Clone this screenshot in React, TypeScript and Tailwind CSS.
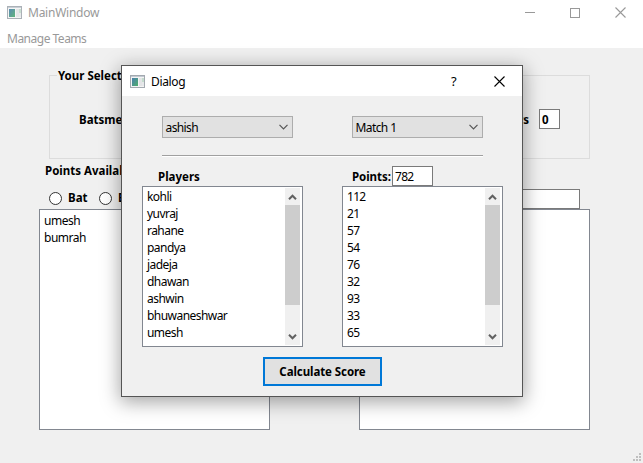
import React from "react";

const players = ["kohli", "yuvraj", "rahane", "pandya", "jadeja", "dhawan", "ashwin", "bhuwaneshwar", "umesh"];
const points = ["112", "21", "57", "54", "76", "32", "93", "33", "65"];

function WindowIcon({ faded = false }: { faded?: boolean }) {
  return (
    <svg width="15" height="13" viewBox="0 0 15 13" className={faded ? "opacity-90" : ""} shapeRendering="crispEdges">
      <defs>
        <linearGradient id="pane" x1="0" y1="0" x2="1" y2="1">
          <stop offset="0" stopColor="#4a7fae" />
          <stop offset="1" stopColor="#4fae6c" />
        </linearGradient>
      </defs>
      <rect x="0.5" y="0.5" width="14" height="12" fill="#f4f4f4" stroke="#a3a9b0" />
      <rect x="1" y="1" width="13" height="1" fill="#c3cad2" />
      <rect x="2" y="3" width="6" height="8" fill="url(#pane)" />
      <rect x="9" y="3" width="3" height="8" fill="#e3e4e6" />
      <rect x="12" y="3" width="2" height="4" fill="#c3dccd" />
      <rect x="12" y="7" width="2" height="4" fill="#e6e8ea" />
    </svg>
  );
}

function CloseIcon() {
  return (
    <svg width="11" height="11" viewBox="0 0 11 11" fill="none" stroke="currentColor" strokeWidth="1.1">
      <path d="M.5.5l10 10M10.5.5l-10 10" />
    </svg>
  );
}

function Combo({ value }: { value: string }) {
  return (
    <div className="flex h-[22px] w-[131px] items-center justify-between border border-[#adadad] bg-[#e1e1e1] pl-[2.5px] pr-1">
      <span className="pt-[2px] text-[12px] leading-4 tracking-[-0.6px]">{value}</span>
      <svg width="9" height="6" viewBox="0 0 9 6" fill="none" stroke="#555" strokeWidth="1.2">
        <path d="M.5.8l4 4 4-4" />
      </svg>
    </div>
  );
}

function ScrollList({ items, className }: { items: string[]; className: string }) {
  return (
    <div className="flex h-[161px] w-[161px] border border-[#828790] bg-white pr-px">
      <ul className={"min-w-0 flex-1 pl-1 pt-px text-[12px] leading-[17px] " + className}>
        {items.map((item) => (
          <li key={item} className="h-[17px]">{item}</li>
        ))}
      </ul>
      <div className="my-px flex w-4 flex-col items-center border-r border-white bg-[#f0f0f0]">
        <div className="flex h-[17px] items-center justify-center">
          <svg width="9" height="6" viewBox="0 0 9 6" fill="none" stroke="#606060" strokeWidth="2">
            <path d="M1 5.2l3.5-3.5L8 5.2" />
          </svg>
        </div>
        <div className="h-[100px] w-full bg-[#cdcdcd]" />
        <div className="mt-auto flex h-[17px] items-center justify-center">
          <svg width="9" height="6" viewBox="0 0 9 6" fill="none" stroke="#606060" strokeWidth="2">
            <path d="M1 .8l3.5 3.5L8 .8" />
          </svg>
        </div>
      </div>
    </div>
  );
}

function Radio({ label }: { label: string }) {
  return (
    <div className="flex w-[50px] items-center whitespace-nowrap">
      <span className="mr-[6px] size-[13px] shrink-0 rounded-full border border-[#333] bg-white" />
      <span>{label}</span>
    </div>
  );
}

function Dialog() {
  return (
    <section className="absolute left-[121px] top-[65px] flex h-[332px] w-[402px] flex-col border border-[#555] bg-[#f0f0f0] shadow-[0_4px_18px_1px_rgba(0,0,0,0.36)]">
      <header className="flex h-[30px] shrink-0 items-center bg-white pl-2">
        <WindowIcon />
        <span className="ml-[6px] pt-px text-[12px] leading-4 tracking-[-0.35px]">Dialog</span>
        <span className="ml-auto mr-[36px] w-[7px] text-[13px] leading-4">?</span>
        <span className="mr-[17px]"><CloseIcon /></span>
      </header>
      <div className="flex flex-col pt-5">
        <div className="ml-10 mr-[39px] flex justify-between">
          <Combo value="ashish" />
          <Combo value="Match 1" />
        </div>
        <div className="ml-10 mr-[39px] mt-[17px] h-[2px] border-t border-[#a0a0a0] bg-white" />
        <div className="mt-[9px] flex pl-5">
          <div className="w-[200px]">
            <div className="flex h-5 items-center pl-4 pt-[2px] text-[11.5px] font-bold">Players</div>
            <ScrollList items={players} className="tracking-[-0.55px]" />
          </div>
          <div>
            <div className="flex h-5 items-center pl-[10px]">
              <span className="w-10 whitespace-nowrap pt-[2px] text-[11.5px] font-bold tracking-[-0.05px]">Points:</span>
              <span className="h-5 w-[41px] border border-[#7a7a7a] bg-white pl-[2px] text-[12px] leading-5 tracking-[-0.7px]">782</span>
            </div>
            <ScrollList items={points} className="tracking-[-0.7px]" />
          </div>
        </div>
        <button className="ml-[141px] mt-[10px] h-[29px] w-[119px] whitespace-nowrap border-2 border-[#0078d7] bg-[#e1e1e1] text-[11.5px] font-bold leading-[25px] tracking-[-0.08px]">
          Calculate Score
        </button>
      </div>
    </section>
  );
}

export default function App() {
  return (
    <main className="relative h-[463px] w-[643px] overflow-hidden bg-[#f0f0f0] font-['Noto_Sans','Open_Sans',sans-serif] text-black">
      <header className="flex h-[25px] items-center bg-white pl-[7px] text-[#999]">
        <WindowIcon faded />
        <span className="ml-[6px] pt-px text-[12px] leading-4 tracking-[-0.25px]">MainWindow</span>
        <div className="ml-auto mr-[17px] flex items-center gap-[35px]">
          <span className="h-px w-[10px] bg-[#999]" />
          <span className="size-[10px] border border-[#999]" />
          <CloseIcon />
        </div>
      </header>
      <nav className="h-[23px] bg-white pl-[7px] pt-[6px] text-[12px] leading-4 tracking-[-0.5px] text-[#999]">Manage Teams</nav>

      <div className="flex flex-col pt-[27px] text-[11.5px] font-bold">
        <div className="ml-[49px] mr-[53px] flex h-[84px] flex-col border border-[#dcdcdc]">
          <div className="-mt-2 ml-[7px] h-4 w-[120px] bg-[#f0f0f0] pl-px leading-4">Your Selections</div>
          <div className="mt-[25px] flex h-5 items-center">
            <span className="pl-[29px] pt-[2px]">Batsmen</span>
            <span className="ml-auto mr-[10px] pt-[2px]">Bowlers</span>
            <span className="mr-[29px] flex h-5 w-[21px] items-center border border-[#7a7a7a] bg-white pl-[2px] pt-px">0</span>
          </div>
        </div>
        <div className="ml-[45px] mt-1 h-4 leading-4">Points Available</div>
        <div className="mt-[10px] flex h-5">
          <div className="ml-[49px] flex h-[18px] items-center">
            <Radio label="Bat" />
            <Radio label="Bow" />
          </div>
          <div className="ml-auto mr-[63px] h-5 w-[190px] border border-[#7a7a7a] bg-white" />
        </div>
        <div className="ml-[39px] mr-[53px] flex justify-between font-normal">
          <div className="h-[221px] w-[231px] border border-[#828790] bg-white pl-1 pt-[2px] text-[12px] leading-[17px] tracking-[-0.5px]">
            <div>umesh</div>
            <div>bumrah</div>
          </div>
          <div className="h-[221px] w-[231px] border border-[#828790] bg-white" />
        </div>
      </div>

      <svg className="absolute bottom-[1px] right-[1px]" width="9" height="9" viewBox="0 0 9 9" fill="#bfbfbf" shapeRendering="crispEdges">
        <path d="M6 0h2v2H6zM3 3h2v2H3zM6 3h2v2H6zM0 6h2v2H0zM3 6h2v2H3zM6 6h2v2H6z" />
      </svg>
      <Dialog />
    </main>
  );
}
